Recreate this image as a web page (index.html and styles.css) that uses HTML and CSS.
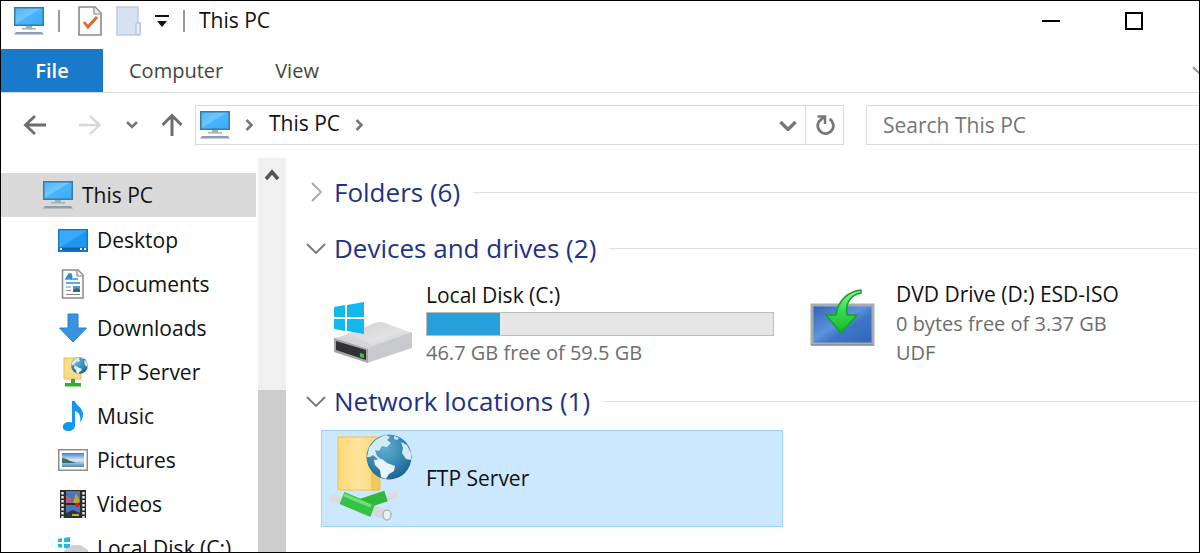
FILE: index.html
```html
<!DOCTYPE html>
<html lang="en">
<head>
    <meta charset="UTF-8">
    <meta name="viewport" content="width=device-width, initial-scale=1.0">
    <title>This PC</title>
    <link rel="stylesheet" href="styles.css">
</head>
<body>
    <svg class="defs" width="0" height="0" aria-hidden="true">
        <defs>
            <linearGradient id="screen" x1="0" y1="0" x2="1" y2="1">
                <stop offset="0" stop-color="#4db4f2"/>
                <stop offset="0.45" stop-color="#6cc8ff"/>
                <stop offset="0.5" stop-color="#46b5fb"/>
                <stop offset="1" stop-color="#3aaaf5"/>
            </linearGradient>
            <linearGradient id="sky" x1="0" y1="0" x2="0" y2="1">
                <stop offset="0" stop-color="#3f7fd0"/>
                <stop offset="0.5" stop-color="#d8ecf8"/>
                <stop offset="1" stop-color="#4f87b0"/>
            </linearGradient>
            <radialGradient id="globe" cx="0.4" cy="0.3" r="0.7">
                <stop offset="0" stop-color="#62aed0"/>
                <stop offset="0.6" stop-color="#3688b4"/>
                <stop offset="1" stop-color="#1f6592"/>
            </radialGradient>
            <linearGradient id="folder" x1="0" y1="0" x2="1" y2="0">
                <stop offset="0" stop-color="#fbd978"/>
                <stop offset="0.5" stop-color="#ffe59c"/>
                <stop offset="1" stop-color="#fbd66f"/>
            </linearGradient>
            <linearGradient id="disk" x1="0" y1="0" x2="1" y2="1">
                <stop offset="0" stop-color="#cdcdcf"/>
                <stop offset="0.6" stop-color="#e2e2e4"/>
                <stop offset="1" stop-color="#c9c9cc"/>
            </linearGradient>
            <linearGradient id="dvd" x1="0" y1="0" x2="1" y2="1">
                <stop offset="0" stop-color="#2f62b2"/>
                <stop offset="0.45" stop-color="#5b93dc"/>
                <stop offset="0.6" stop-color="#3f75c6"/>
                <stop offset="1" stop-color="#3265b8"/>
            </linearGradient>
            <linearGradient id="green" x1="0" y1="0" x2="0" y2="1">
                <stop offset="0" stop-color="#8cf08c"/>
                <stop offset="0.5" stop-color="#35d94c"/>
                <stop offset="1" stop-color="#14b828"/>
            </linearGradient>
        </defs>
        <symbol id="pc" viewBox="0 0 30 28">
            <rect x="0.75" y="0.75" width="28.5" height="17.5" fill="url(#screen)" stroke="#3c7b9e" stroke-width="1.5"/>
            <path d="M12 19h6v2h4v1.500H8V21h4z" fill="#9fb0bd"/>
            <path d="M2 25h26l2 2.500H0z" fill="#8e9eae"/>
        </symbol>
        <symbol id="earth" viewBox="0 0 46 46">
            <circle cx="23" cy="23" r="22.500" fill="url(#globe)"/>
            <path d="M3 14Q9 4 20 1l4 2-3 3 4 3-4 4-5-1-3 5-4-1 2 6 4 3-2 1-6-5-3 2-3 0z" fill="#d5ebf3"/>
            <path d="M8 26l8-1 5 4 8 3-1 5-5 3-3 5-5-2-1-7-5-5z" fill="#e6f5fa"/>
            <path d="M35 8l6 3 4 8v7l-5-1-4-6 1-5z" fill="#d5ebf3"/>
            <path d="M28 2l5 2-2 2-3-1z" fill="#d5ebf3"/>
        </symbol>
    </svg>

    <div class="window">
        <header class="titlebar">
            <svg width="30" height="28"><use href="#pc"/></svg>
            <span class="separator"></span>
            <button class="quick" aria-label="Properties">
                <svg width="24" height="30" viewBox="0 0 24 30">
                    <path d="M1 1h16l6 6v22H1z" fill="#fbfbfb" stroke="#8a8a8a" stroke-width="1.600"/>
                    <path d="M16 1v7h7" fill="#eee" stroke="#8a8a8a" stroke-width="1.200"/>
                    <path d="M6 16l4 5 9-10" fill="none" stroke="#e0662c" stroke-width="2.800"/>
                </svg>
            </button>
            <button class="quick" aria-label="New folder">
                <svg width="25" height="30" viewBox="0 0 25 30">
                    <path d="M1 1h21v16h2v12H1z" fill="#d7e2f0" stroke="#bccbe0" stroke-width="1.500"/>
                    <path d="M20 28V17h4v12z" fill="#e6edf6" stroke="#aebfd6"/>
                </svg>
            </button>
            <button class="quick" aria-label="Customize Quick Access Toolbar">
                <svg width="14" height="12" viewBox="0 0 14 12">
                    <path d="M0 0h14v2H0zM2 6h10L7 12z" fill="#111"/>
                </svg>
            </button>
            <span class="separator"></span>
            <h1 class="title">This PC</h1>
            <div class="window-controls">
                <button aria-label="Minimize">
                    <svg width="20" height="20" viewBox="0 0 20 20"><path d="M1 10h18" stroke="#000" stroke-width="2"/></svg>
                </button>
                <button aria-label="Maximize">
                    <svg width="20" height="20" viewBox="0 0 20 20"><rect x="2" y="2" width="16" height="16" fill="none" stroke="#000" stroke-width="2"/></svg>
                </button>
            </div>
        </header>

        <nav class="ribbon">
            <button class="tab file">File</button>
            <button class="tab">Computer</button>
            <button class="tab">View</button>
            <button class="expand" aria-label="Expand the Ribbon">
                <svg width="7" height="12" viewBox="0 0 7 12"><path d="M1 2l7 7" stroke="#999" stroke-width="2"/></svg>
            </button>
        </nav>

        <div class="navbar">
            <div class="history">
                <button aria-label="Back">
                    <svg width="24" height="22" viewBox="0 0 24 22"><path d="M23 11H3M12 2L2.500 11l9.500 9" fill="none" stroke="#6d6d6d" stroke-width="2.800"/></svg>
                </button>
                <button class="forward" aria-label="Forward">
                    <svg width="24" height="22" viewBox="0 0 24 22"><path d="M1 11h20M12 2l9.500 9-9.500 9" fill="none" stroke="#d6d6d6" stroke-width="2.400"/></svg>
                </button>
                <button aria-label="Recent locations">
                    <svg width="12" height="8" viewBox="0 0 12 8"><path d="M1 1l5 5 5-5" fill="none" stroke="#777" stroke-width="2.600"/></svg>
                </button>
                <button aria-label="Up">
                    <svg width="22" height="24" viewBox="0 0 22 24"><path d="M11 23V3M1.500 12L11 2.500l9.500 9.500" fill="none" stroke="#6d6d6d" stroke-width="3"/></svg>
                </button>
            </div>
            <div class="address">
                <svg width="30" height="28"><use href="#pc"/></svg>
                <svg width="9" height="12" viewBox="0 0 9 12"><path d="M1.500 1l5 5-5 5" fill="none" stroke="#777" stroke-width="2.600"/></svg>
                <a class="crumb" href="#">This PC</a>
                <svg width="9" height="12" viewBox="0 0 9 12"><path d="M1.500 1l5 5-5 5" fill="none" stroke="#777" stroke-width="2.600"/></svg>
                <button class="previous" aria-label="Previous locations">
                    <svg width="18" height="12" viewBox="0 0 18 12"><path d="M1.500 3L9 10.500 16.500 3" fill="none" stroke="#777" stroke-width="3.400"/></svg>
                </button>
                <button class="refresh" aria-label="Refresh">
                    <svg width="20" height="22" viewBox="0 0 20 22">
                        <path d="M14.500 5A7.800 7.800 0 1 1 4 7.500L9 3" fill="none" stroke="#777" stroke-width="2.800"/>
                        <path d="M2.500 2.500h7.500v7.500" fill="none" stroke="#777" stroke-width="2.500"/>
                    </svg>
                </button>
            </div>
            <input class="search" type="text" placeholder="Search This PC" aria-label="Search This PC">
        </div>

        <div class="body">
            <nav class="tree">
                <a class="item root" href="#">
                    <svg width="30" height="28"><use href="#pc"/></svg>This PC
                </a>
                <a class="item" href="#">
                    <svg width="30" height="28" viewBox="0 0 30 28">
                        <rect x="0.750" y="3.750" width="28.500" height="21.500" fill="#1e97f3" stroke="#1676b8" stroke-width="1.500"/>
                        <path d="M1.500 21.500L28.500 5V4.500h-27z" fill="#38a9fb"/>
                        <path d="M1.500 21.500h27v3h-27z" fill="#0e62a8"/>
                        <path d="M2 22h2v2H2zM22 22h2v2h-2zM26 22h2v2h-2z" fill="#fff"/>
                    </svg>Desktop
                </a>
                <a class="item" href="#">
                    <svg width="30" height="30" viewBox="0 0 30 30">
                        <path d="M4.500 1H20l5 5v23H4.500z" fill="#fdfdfd" stroke="#8a8a8a" stroke-width="1.500"/>
                        <path d="M19 1v6h6" fill="#eee" stroke="#8a8a8a" stroke-width="1.200"/>
                        <path d="M8 10l3-5h2l1 5h-2v-2h-1l-1 2zM15 10h5M8 14h14" fill="#2a8fd0" stroke="#2a8fd0" stroke-width="1.500"/>
                        <path d="M8 18h5M8 21.500h5M8 25.500h14" stroke="#8b8b8b" stroke-width="1.200"/>
                        <path d="M15 17h7v6h-7z" fill="#5798c5"/>
                        <path d="M15 21l4-2 3 2v2h-7z" fill="#3d6b4d"/>
                    </svg>Documents
                </a>
                <a class="item" href="#">
                    <svg width="30" height="30" viewBox="0 0 30 30"><path d="M10 1h10v14h8.500L15 29 1.500 15H10z" fill="#3593e0" stroke="#2c7fc6"/></svg>Downloads
                </a>
                <a class="item" href="#">
                    <svg width="30" height="30" viewBox="0 0 30 30">
                        <path d="M6 1h17v21H6z" fill="#fbdd85" stroke="#e3bd58"/>
                        <path d="M13 22h4v4h6v3.500H7V26h6z" fill="#32ad35"/>
                        <use href="#earth" x="13" y="0" width="17" height="17"/>
                    </svg>FTP Server
                </a>
                <a class="item" href="#">
                    <svg width="30" height="30" viewBox="0 0 30 30">
                        <path d="M14 0h3c1 5 8 6 8 13 0 4-1 6-3 8 1-5 0-9-5-11v14c0 4-3 6-7 6-7 0-7-8 0-9 2 0 3 0 4 .5z" fill="#1397f0"/>
                    </svg>Music
                </a>
                <a class="item" href="#">
                    <svg width="30" height="28" viewBox="0 0 30 28">
                        <rect x="0.750" y="3.750" width="28.500" height="20.500" fill="#fff" stroke="#8c8c8c" stroke-width="1.500"/>
                        <rect x="4" y="7" width="22" height="14" fill="url(#sky)"/>
                        <path d="M4 12c5 0 8 4 15 5H4z" fill="#3b6d64"/>
                    </svg>Pictures
                </a>
                <a class="item" href="#">
                    <svg width="30" height="28" viewBox="0 0 30 28">
                        <path d="M2 0h26v28H2z" fill="#2b2b2b"/>
                        <path d="M4.500 2v26M25.500 2v26" stroke="#e6e6e6" stroke-width="2.500" stroke-dasharray="2.500 1.500"/>
                        <path d="M8 1h14v12H8zM8 15h14v12H8z" fill="#4776bd"/>
                        <path d="M8 6l5 2v5H8z" fill="#c25c77"/>
                        <path d="M18 3l4 8-2 2h-5z" fill="#c6a51c"/>
                        <path d="M17 13h4v4h-3z" fill="#a72e35"/>
                        <path d="M8 23l7-3 7 3v4H8z" fill="#27374a"/>
                        <path d="M14 24h7v2h-7z" fill="#d6a827"/>
                    </svg>Videos
                </a>
                <a class="item" href="#">
                    <svg width="30" height="30" viewBox="0 0 30 30">
                        <path d="M0 6l4-1v4H0zM6 5l6-1v5H6zM0 11h4v4l-4-1zM6 11h6v5l-6-1z" fill="#22b8e0"/>
                        <path d="M6 18l8-6h9l7 5v8H6z" fill="#d0d1d4"/>
                    </svg>Local Disk (C:)
                </a>
            </nav>
            <div class="scrollbar">
                <button aria-label="Scroll up">
                    <svg width="16" height="14" viewBox="0 0 16 14"><path d="M2 11l6-7 6 7" fill="none" stroke="#555" stroke-width="3.600"/></svg>
                </button>
                <div class="thumb"></div>
            </div>

            <main class="content">
                <h2 class="group">
                    <button>
                        <svg width="20" height="20" viewBox="0 0 20 20"><path d="M6 1l9 9-9 9" fill="none" stroke="#a6a6a6" stroke-width="1.800"/></svg>Folders (6)
                    </button>
                </h2>

                <h2 class="group">
                    <button>
                        <svg width="20" height="20" viewBox="0 0 20 20"><path d="M1 6l9 9 9-9" fill="none" stroke="#777" stroke-width="1.800"/></svg>Devices and drives (2)
                    </button>
                </h2>
                <div class="tiles drives">
                    <div class="tile">
                        <svg width="80" height="80" viewBox="0 -16 80 80">
                            <path d="M1 39l41-16q5-2 10 0l27 10-39 14z" fill="url(#disk)"/>
                            <path d="M34 49q3-1 6-3l39-14v16L37 62q-1 1-3 0z" fill="#c9cacd"/>
                            <path d="M1 38q20-6 39 8l-6 5z" fill="#d6d6d8"/>
                            <path d="M1 38l34 11v14L1 52z" fill="#a5a5a8"/>
                            <path d="M3 41l30 9v10L3 50z" fill="#303234"/>
                            <path d="M27 53l4 1v4l-4-1z" fill="#32c84a"/>
                            <path d="M1 7l11-2v12H1zM14 5l17-3v15H14zM1 19h11v12L1 29zM14 19h17v15l-17-3z" fill="#12b7ee"/>
                        </svg>
                        <div class="info">
                            <div class="name" id="disk-c">Local Disk (C:)</div>
                            <progress class="usage" value="21" max="100" aria-labelledby="disk-c"></progress>
                            <div class="detail">46.7 GB free of 59.5 GB</div>
                        </div>
                    </div>
                    <div class="tile">
                        <svg width="80" height="80" viewBox="0 -3 80 80">
                            <rect x="9" y="18" width="61" height="39" fill="url(#dvd)" stroke="#a5adb2" stroke-width="3"/>
                            <path d="M8 58h63" stroke="#878f94" stroke-width="1.500"/>
                            <path d="M58 3C47 4 35 12 33 28H23L38 46l16-18H44C42 17 47 8 58 6z" fill="url(#green)" stroke="#15a22b" stroke-width="1.500" stroke-linejoin="round"/>
                        </svg>
                        <div class="info">
                            <div class="name">DVD Drive (D:) ESD-ISO</div>
                            <div class="detail">0 bytes free of 3.37 GB</div>
                            <div class="detail">UDF</div>
                        </div>
                    </div>
                </div>

                <h2 class="group">
                    <button>
                        <svg width="20" height="20" viewBox="0 0 20 20"><path d="M1 6l9 9 9-9" fill="none" stroke="#777" stroke-width="1.800"/></svg>Network locations (1)
                    </button>
                </h2>
                <div class="tiles">
                    <div class="tile selected">
                        <svg width="84" height="90" viewBox="0 0 84 90">
                            <path d="M9 3h42v53H9z" fill="url(#folder)" stroke="#eebf52"/>
                            <path d="M43 24l7-3v35h-7z" fill="#f4c95f" stroke="#e8b94f"/>
                            <use href="#earth" x="37" y="0" width="46" height="46"/>
                            <path d="M4 64l12 4M54 65l11-4" stroke="#dadde0" stroke-width="8" stroke-linecap="round"/>
                            <path d="M30 71l27-9" stroke="#2fb83c" stroke-width="11"/>
                            <path d="M13 64l31 13" stroke="#38c245" stroke-width="13"/>
                            <path d="M15 61l27 11" stroke="#6fe074" stroke-width="3"/>
                            <path d="M44 76l14 5" stroke="#d3d9dc" stroke-width="10"/>
                            <ellipse cx="58" cy="81" rx="4" ry="5" fill="#edf0f2" stroke="#b0b7bc" stroke-width="1.500"/>
                        </svg>
                        <div class="info">
                            <div class="name">FTP Server</div>
                        </div>
                    </div>
                </div>
            </main>
        </div>
    </div>
</body>
</html>
```

FILE: styles.css
```css
* {
    box-sizing: border-box;
}
body {
    margin: 0;
    font-family: "Open Sans", "Noto Sans", sans-serif;
    font-size: 21px;
    line-height: 29px;
    color: #111;
    background-color: #fff;
}
button {
    padding: 0;
    border: none;
    background: none;
    font: inherit;
    color: inherit;
    cursor: pointer;
}
a {
    color: inherit;
    text-decoration: none;
}
svg {
    display: block;
    flex-shrink: 0;
}
.defs {
    position: absolute;
}
.window {
    display: flex;
    flex-direction: column;
    height: 100vh;
    border: 1px solid #000;
    overflow: hidden;
}

/* title bar */
.titlebar {
    display: flex;
    align-items: center;
    gap: 14px;
    height: 48px;
    padding: 0 24px 9px 13px;
    flex-shrink: 0;
}
.separator {
    width: 2px;
    height: 22px;
    margin-right: 4px;
    background-color: #999;
}
.title {
    margin: 0 0 0 -4px;
    font-size: 21px;
    font-weight: 400;
}
.window-controls {
    display: flex;
    margin-left: auto;
}
.window-controls button {
    display: grid;
    place-items: center;
    width: 83px;
    height: 39px;
}

/* ribbon tabs */
.ribbon {
    display: flex;
    height: 44px;
    border-bottom: 1px solid #d9d9d9;
    flex-shrink: 0;
}
.tab {
    padding: 0 26px;
    font-size: 20px;
    color: #444;
}
.tab.file {
    width: 102px;
    background-color: #1979ca;
    color: #fff;
    font-weight: 600;
}
.expand {
    margin-left: auto;
}

/* address row */
.navbar {
    display: flex;
    height: 65px;
    padding: 12px 0 13px 22px;
    flex-shrink: 0;
}
.history {
    display: flex;
    align-items: center;
    justify-content: space-between;
    width: 160px;
    margin-right: 12px;
}
.forward {
    margin-left: 8px;
}
.address {
    display: flex;
    align-items: center;
    flex: 1;
    gap: 15px;
    min-width: 0;
    padding-left: 4px;
    border: 1px solid #d9d9d9;
}
.crumb {
    padding-bottom: 4px;
}
.previous {
    margin-left: auto;
}
.refresh {
    display: grid;
    place-items: center;
    width: 38px;
    height: 100%;
    margin-left: -7px;
    border-left: 1px solid #d9d9d9;
}
.search {
    width: 333px;
    margin-left: 22px;
    padding: 0 16px;
    border: 1px solid #d9d9d9;
    border-right: none;
    border-radius: 0;
    font: inherit;
    outline: none;
}
.search::placeholder {
    color: #757575;
    opacity: 1;
}

/* folder tree */
.body {
    display: flex;
    flex: 1;
    min-height: 0;
}
.tree {
    width: 255px;
    padding-top: 15px;
    flex-shrink: 0;
    overflow: hidden;
}
.item {
    display: flex;
    align-items: center;
    gap: 9px;
    height: 44px;
    padding-left: 57px;
    white-space: nowrap;
}
.item.root {
    margin-bottom: 1px;
    padding-left: 42px;
    background-color: #d9d9d9;
}
.scrollbar {
    display: flex;
    flex-direction: column;
    justify-content: space-between;
    width: 28px;
    margin-left: 2px;
    flex-shrink: 0;
    background-color: #f0f0f0;
}
.scrollbar button {
    display: grid;
    place-items: center;
    height: 34px;
}
.thumb {
    height: 41%;
    background-color: #cdcdcd;
}

/* content groups */
.content {
    flex: 1;
    min-width: 0;
    padding: 7px 0 0 20px;
    overflow: hidden;
}
.group {
    display: flex;
    align-items: center;
    gap: 13px;
    height: 56px;
    margin: 0;
    padding-bottom: 2px;
    font-size: 26px;
    font-weight: 400;
    color: #1e3287;
}
.group button {
    display: flex;
    align-items: center;
    gap: 8px;
}
.group::after {
    content: "";
    flex: 1;
    height: 1px;
    background-color: #e0e0e0;
}
.tiles {
    display: grid;
    grid-template-columns: repeat(2, 462px);
    gap: 8px;
    padding-left: 15px;
}
.tile {
    display: flex;
    align-items: center;
    height: 97px;
    border: 1px solid transparent;
}
.drives .tile {
    padding-bottom: 4px;
}
.tile > svg {
    margin: 0 13px 0 11px;
}
.tile.selected {
    border-color: #99d1ff;
    background-color: #cce8ff;
}
.tile.selected > svg {
    margin: 0 13px 0 7px;
}
.info {
    flex: 1;
    white-space: nowrap;
}
.detail {
    font-size: 20px;
    color: #6d6d6d;
}
.usage {
    display: block;
    width: 348px;
    height: 24px;
    margin: 2px 0;
    border: 1px solid #bcbcbc;
    background-color: #e6e6e6;
    appearance: none;
}
.usage::-webkit-progress-bar {
    background-color: #e6e6e6;
}
.usage::-webkit-progress-value {
    background-color: #26a0da;
}
```
